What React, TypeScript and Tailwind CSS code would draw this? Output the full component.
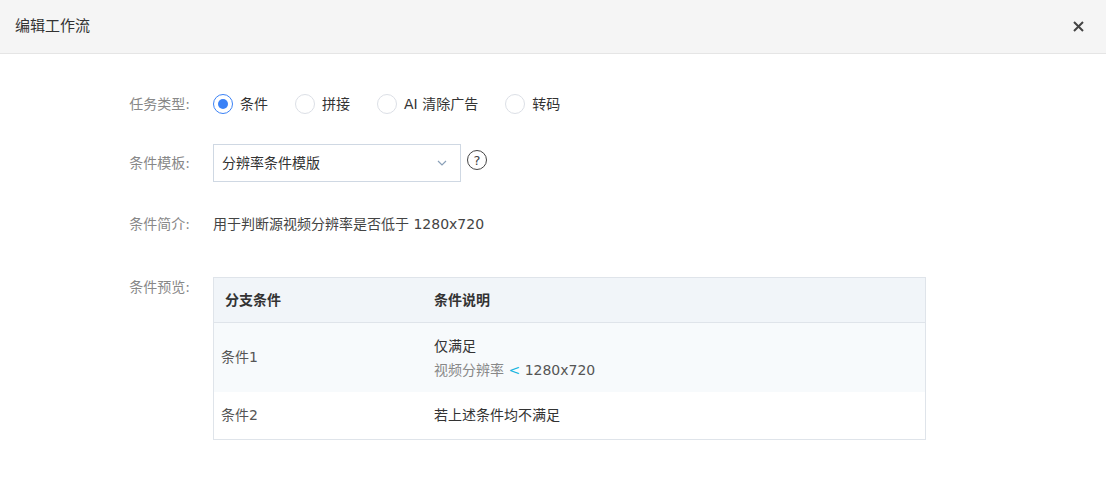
const font = { fontFamily: '"DejaVu Sans", "Noto Sans CJK SC", sans-serif' };

const Radio = ({ label, checked }: { label: string; checked?: boolean }) => (
  <label className="flex items-center gap-[7px] mr-[27px] text-[14px] text-[#333]">
    <span className={`w-[20px] h-[20px] rounded-full border flex items-center justify-center bg-white ${checked ? 'border-[#3b82f6]' : 'border-[#dcdfe6]'}`}>
      {checked && <span className="w-[10px] h-[10px] rounded-full bg-[#3b82f6]" />}
    </span>
    {label}
  </label>
);

const Row = ({ label, children, className = '' }: { label: string; children: React.ReactNode; className?: string }) => (
  <div className={`flex ${className}`}>
    <div className="w-[192px] shrink-0 text-right pr-[2px] text-[14px] text-[#888]">{label}</div>
    <div className="ml-[21px] flex-1">{children}</div>
  </div>
);

export default function App() {
  return (
    <div className="w-[1106px] h-[483px] bg-white" style={font}>
      <div className="h-[54px] bg-[#f5f5f5] border-b border-[#e5e5e5] flex items-center justify-between pl-[15px] pr-[22px]">
        <span className="text-[15px] text-[#333]">编辑工作流</span>
        <svg width="11" height="11" viewBox="0 0 11 11"><path d="M1 1l9 9M10 1l-9 9" stroke="#444" strokeWidth="2" /></svg>
      </div>

      <Row label="任务类型:" className="mt-[38px] items-center h-[24px]">
        <div className="flex items-center">
          <Radio label="条件" checked />
          <Radio label="拼接" />
          <Radio label="AI 清除广告" />
          <Radio label="转码" />
        </div>
      </Row>

      <Row label="条件模板:" className="mt-[28px] items-center h-[38px]">
        <div className="flex items-center">
          <div className="w-[248px] h-[38px] border border-[#cfd8e3] flex items-center justify-between px-[8px] text-[14px] text-[#333]">
            <span>分辨率条件模版</span>
            <svg width="12" height="12" viewBox="0 0 12 12" className="mr-[4px]"><path d="M2 4l4 4 4-4" fill="none" stroke="#8aa0b8" strokeWidth="1.2" /></svg>
          </div>
          <span className="ml-[6px] -mt-[6px] w-[20px] h-[20px] rounded-full border-[1.5px] border-[#444] flex items-center justify-center text-[13px] text-[#444] leading-none">?</span>
        </div>
      </Row>

      <Row label="条件简介:" className="mt-[22px] items-center h-[40px]">
        <span className="text-[14px] text-[#444]">用于判断源视频分辨率是否低于 1280x720</span>
      </Row>

      <Row label="条件预览:" className="mt-[33px]">
        <div className="w-[713px] border border-[#dfe4ea] text-[14px]">
          <div className="flex h-[45px] items-center bg-[#f1f5f9] border-b border-[#dfe4ea] font-bold text-[#333]">
            <div className="w-[220px] pl-[11px]">分支条件</div>
            <div>条件说明</div>
          </div>
          <div className="flex h-[69px] items-center bg-[#f7fafc]">
            <div className="w-[220px] pl-[7px] text-[#555]">条件1</div>
            <div className="leading-[24px]">
              <div className="text-[#333]">仅满足</div>
              <div className="text-[#888]">视频分辨率 <span className="text-[#17b6e0]">&lt;</span> <span className="text-[#555]">1280x720</span></div>
            </div>
          </div>
          <div className="flex h-[47px] items-center">
            <div className="w-[220px] pl-[7px] text-[#555]">条件2</div>
            <div className="text-[#333]">若上述条件均不满足</div>
          </div>
        </div>
      </Row>
    </div>
  );
}
